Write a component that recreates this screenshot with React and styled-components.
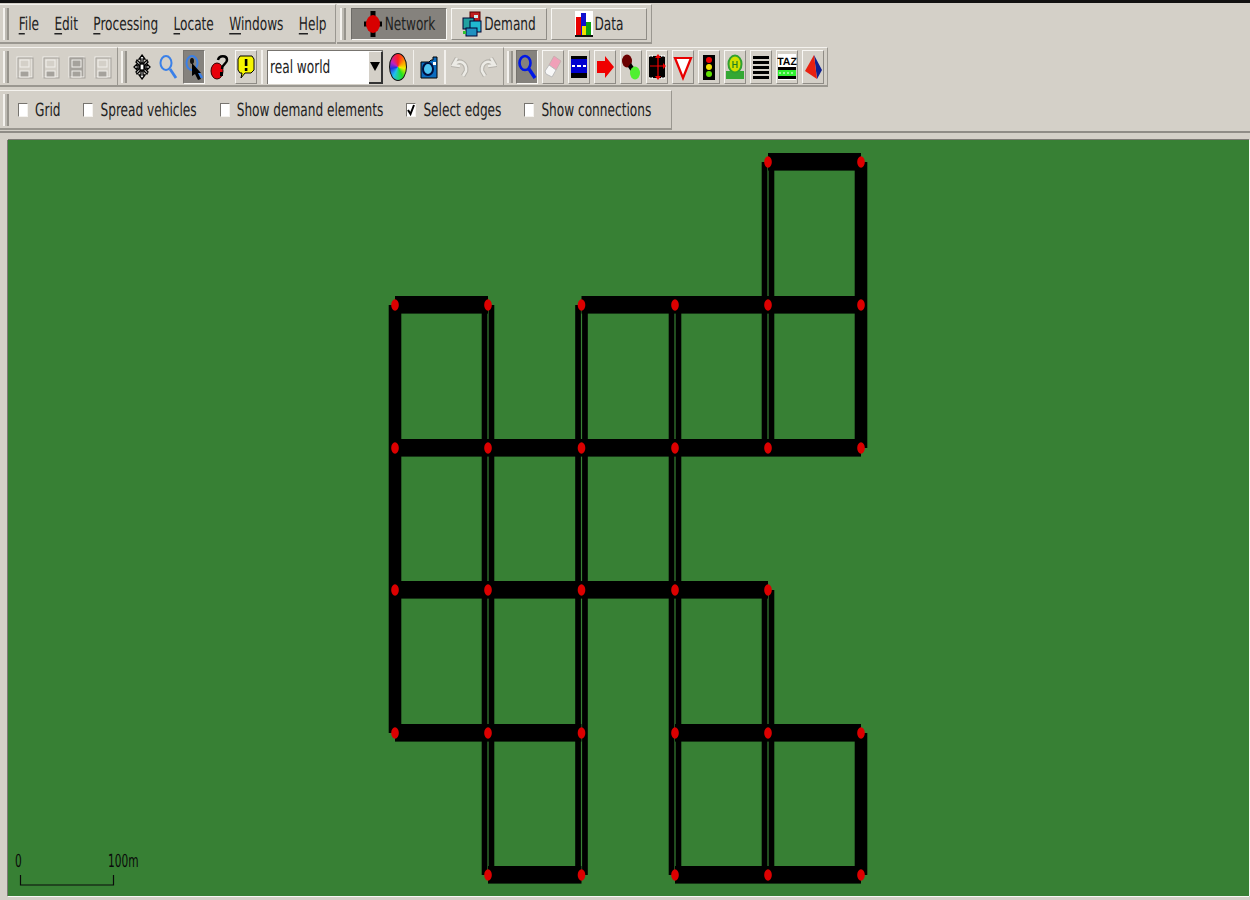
import styled, { createGlobalStyle } from "styled-components";

const GlobalStyle = createGlobalStyle`
  html, body { margin: 0; padding: 0; background: #d4d0c8; }
  body { font-family: "DejaVu Sans", sans-serif; color: #222; overflow: hidden; text-rendering: geometricPrecision; }
`;

const Page = styled.div`
  width: 1250px;
  height: 900px;
  display: flex;
  flex-direction: column;
  background: #d4d0c8;
  border-top: 3px solid #111;
  box-sizing: border-box;
`;

const Dock = styled.div`
  display: flex;
  flex-direction: column;
  gap: 3px;
  padding-top: 1px;
  border-bottom: 2px solid #8f8c86;
  padding-bottom: 1px;
`;

const Row = styled.div`
  display: flex;
  height: 40px;
`;

const Bar = styled.div`
  width: ${(p) => p.$width}px;
  margin-left: ${(p) => p.$left || 0}px;
  box-sizing: border-box;
  display: flex;
  align-items: center;
  padding-left: 3px;
  white-space: nowrap;
  border-top: 1px solid #f4f2ee;
  border-right: 1px solid #9a9790;
  border-bottom: 2px solid #9a9790;
`;

const Grip = styled.div`
  width: 6px;
  height: 32px;
  margin-right: ${(p) => p.$gap}px;
  flex: none;
  border-left: 2px solid #f4f2ee;
  border-right: 2px solid #96938c;
  box-sizing: border-box;
  background: #bdbab3;
`;

const MenuItem = styled.span`
  padding: 0 7.7px;
  font-size: 12.15px;
  display: inline-block;
  transform: scaleY(1.5);
  u { text-underline-offset: 2px; }
`;

const Tabs = styled.div`
  display: flex;
  gap: 4px;
`;

const Tab = styled.div`
  width: 96px;
  height: 32px;
  box-sizing: border-box;
  display: flex;
  align-items: center;
  justify-content: center;
  gap: 2px;
  font-size: 12.15px;
  background: ${(p) => (p.$active ? "#85827d" : "#d4d0c8")};
  border: 1px solid;
  border-color: ${(p) => (p.$active ? "#6c6a66 #f8f7f4 #f8f7f4 #6c6a66" : "#f8f7f4 #8f8c86 #8f8c86 #f8f7f4")};
  span { display: inline-block; transform: scaleY(1.5); }
  svg { flex: none; }
`;

const Tools = styled.div`
  display: flex;
  gap: 4px;
  align-items: center;
`;

const ToolButton = styled.div`
  width: 22px;
  height: 34px;
  flex: none;
  box-sizing: border-box;
  margin-left: ${(p) => p.$left || 0}px;
  display: flex;
  align-items: center;
  justify-content: center;
  background: ${(p) => (p.$pressed ? "#85827d" : "#d4d0c8")};
  border: 1px solid;
  border-color: ${(p) =>
    p.$pressed
      ? "#76736e #f8f7f4 #f8f7f4 #76736e"
      : p.$raised
        ? "#f8f7f4 #8f8c86 #8f8c86 #f8f7f4"
        : "transparent"};
`;

const Sep = styled.div`
  width: ${(p) => (p.$thin ? 1 : 2)}px;
  height: 34px;
  margin: 0 4px;
  flex: none;
  background: #f2f0ec;
`;

const Combo = styled.div`
  width: 116px;
  height: 34px;
  flex: none;
  box-sizing: border-box;
  display: flex;
  background: #fff;
  border-top: 1px solid #77746f;
  border-left: 1px solid #77746f;
  font-size: 12.15px;
`;

const ComboText = styled.span`
  flex: 1;
  padding-left: 2px;
  line-height: 33px;
  transform: scaleY(1.5);
`;

const ComboArrow = styled.div`
  width: 14px;
  box-sizing: border-box;
  background: #d4d0c8;
  border-right: 2px solid #333;
  border-bottom: 2px solid #333;
  border-top: 1px solid #f8f7f4;
  display: flex;
  align-items: center;
  justify-content: center;
  &::after {
    content: "";
    border-left: 5px solid transparent;
    border-right: 5px solid transparent;
    border-top: 9px solid #000;
  }
`;

const Wheel = styled.div`
  width: 16px;
  height: 26px;
  border-radius: 50%;
  border: 1px solid #111;
  background: conic-gradient(#ff2020, #ffa000, #f0f000, #20e020, #20c0f0, #2030e0, #c020c0, #ff2020);
`;

const Options = styled.div`
  display: flex;
  align-items: center;
  gap: 23px;
`;

const Option = styled.label`
  display: flex;
  align-items: center;
  gap: 7px;
  font-size: 12.15px;
  span { display: inline-block; transform: scaleY(1.5); }
`;

const Box = styled.div`
  width: 10px;
  height: 14px;
  flex: none;
  box-sizing: border-box;
  background: #fff;
  border: 1px solid;
  border-color: #77746f #f4f2ee #f4f2ee #77746f;
  display: flex;
  align-items: center;
  justify-content: center;
`;

const CanvasWrap = styled.div`
  flex: 1;
  padding: 7px 0 0 8px;
  min-height: 0;
`;

const Canvas = styled.div`
  width: 1241px;
  height: 756px;
  background: #378034;
  box-shadow: 0 -1px 0 #7d7a75, -1px 0 0 #7d7a75, 0 1px 0 #f8f7f4, 1px 0 0 #f8f7f4;
  svg { display: block; }
`;

const I = ({ children, w = 20, h = 28 }) => (
  <svg width={w} height={h} viewBox={`0 0 ${w} ${h}`}>
    {children}
  </svg>
);

const Floppy = ({ dark }) => (
  <I>
    <rect x="2" y="4" width="15" height="20" fill={dark ? "#a5a29c" : "none"} stroke="#f2f0ec" />
    <rect x="3" y="5" width="15" height="20" fill="none" stroke="#a5a29c" />
    <rect x="5" y="7" width="9" height="7" fill="none" stroke="#f2f0ec" />
    <rect x="5" y="18" width="9" height="6" fill="#a5a29c" stroke="#f2f0ec" />
  </I>
);

const MoveIcon = () => (
  <I>
    <g fill="#fff" stroke="#000" strokeWidth="1.3">
      <path d="M10 2l3 4h-2v4H9V6H7z" />
      <path d="M10 26l3-4h-2v-4H9v4H7z" />
      <path d="M2 14l3-3v2h3v2H5v2z" />
      <path d="M18 14l-3-3v2h-3v2h3v2z" />
      <path d="M5 7l4 4-1 2-4-4zM15 7l-4 4 1 2 4-4zM5 21l4-4-1-2-4 4zM15 21l-4-4 1-2 4 4z" />
      <rect x="8" y="11" width="4" height="6" />
    </g>
  </I>
);

const Lens = ({ color, width = 2 }) => (
  <g fill="none" stroke={color} strokeWidth={width}>
    <ellipse cx="8" cy="10" rx="5.500" ry="7" />
    <path d="M12 16l6 9" strokeWidth={width + 0.8} />
  </g>
);

const InspectIcon = () => (
  <I>
    <Lens color="#3a80e8" />
    <path d="M8 10l9 10-3 0 3 6-3 1-3-6-3 2z" fill="#000" />
    <ellipse cx="8" cy="8" rx="2" ry="3" fill="#111" />
  </I>
);

const QueryIcon = () => (
  <I>
    <ellipse cx="7" cy="18" rx="6" ry="8" fill="#e8000a" stroke="#300" />
    <path d="M8 7c1-5 9-5 9 0 0 4-5 4-5 9" fill="none" stroke="#000" strokeWidth="2.5" />
    <rect x="10" y="19" width="3" height="4" fill="#000" />
  </I>
);

const NoticeIcon = () => (
  <I>
    <path d="M4 3h12l2 3v11l-3 3H9l-4 5 1-5H4l-2-3V6z" fill="#f5f500" stroke="#000" />
    <rect x="8.800" y="6" width="2.600" height="7" fill="#000" />
    <rect x="8.800" y="15" width="2.600" height="3" fill="#000" />
  </I>
);

const CameraIcon = () => (
  <I>
    <path d="M2 9h8l2-2h2V4h4v21H2z" fill="#0a6cc0" stroke="#000" />
    <ellipse cx="9" cy="16" rx="5" ry="6" fill="#4fc4f0" stroke="#001040" strokeWidth="2" />
    <rect x="14" y="9" width="3" height="3" fill="#fff" />
  </I>
);

const UndoIcon = ({ flip }) => (
  <I>
    <g transform={flip ? "translate(20 0) scale(-1 1)" : undefined} fill="none">
      <path d="M6 5l-4 7 7 1M4 11c5-5 12-1 11 7l-3 5" stroke="#b5b2ab" strokeWidth="4.500" />
      <path d="M6 5l-4 7 7 1M4 11c5-5 12-1 11 7l-3 5" stroke="#ecebe6" strokeWidth="2.500" />
    </g>
  </I>
);

const EraserIcon = () => (
  <I>
    <path d="M11 3l7 5-5 9-7-5z" fill="#f0a0b8" stroke="#c8b0b0" />
    <path d="M6 12l7 5-4 7-6-3-1-3z" fill="#f8f8f8" stroke="#bbb" />
  </I>
);

const LaneIcon = () => (
  <I>
    <rect x="2" y="3" width="16" height="3" fill="#000" />
    <rect x="2" y="6" width="16" height="14" fill="#0000d0" />
    <path d="M3 13h3M8 13h4M14 13h3" stroke="#fff" strokeWidth="2" />
    <rect x="2" y="20" width="16" height="5" fill="#000" />
  </I>
);

const ArrowIcon = () => (
  <I>
    <path d="M2 8h8V3l9 11-9 11v-5H2z" fill="#f00000" />
  </I>
);

const ConnectionIcon = () => (
  <I>
    <ellipse cx="6" cy="8" rx="5" ry="6.500" fill="#6a0000" />
    <path d="M10 10l4 6-3 4-4-6z" fill="#000" />
    <ellipse cx="14" cy="20" rx="5" ry="6.500" fill="#50f030" />
  </I>
);

const CrossingIcon = () => (
  <I>
    <rect x="2" y="3" width="16" height="22" fill="#000" />
    <path d="M2 3h4M14 3h4M2 25h4M14 25h4" stroke="#fff" strokeWidth="1.500" strokeDasharray="1.500 1" />
    <path d="M11 3v22M3 13h15" stroke="#f00000" strokeWidth="1.200" />
    <path d="M11 1l-3 4h6zM11 27l-3-4h6zM19 13l-3-3v6z" fill="#f00000" />
  </I>
);

const YieldIcon = () => (
  <I>
    <path d="M2 5h16l-8 20z" fill="#fff" stroke="#e80000" strokeWidth="2.200" />
  </I>
);

const LightIcon = () => (
  <I>
    <rect x="4" y="2" width="12" height="25" fill="#000" />
    <circle cx="10" cy="7" r="3" fill="#f00000" />
    <circle cx="10" cy="14" r="3" fill="#f0e000" />
    <circle cx="10" cy="21" r="3" fill="#60e000" />
  </I>
);

const StopIcon = () => (
  <I>
    <rect x="1" y="18" width="18" height="8" fill="#34a834" />
    <ellipse cx="10" cy="11" rx="6.500" ry="8.500" fill="#d0e000" stroke="#30a030" strokeWidth="2" />
    <path d="M8 8v7M12 8v7M8 11.500h4" stroke="#208020" strokeWidth="1.200" />
  </I>
);

const StripesIcon = () => (
  <I>
    {[3, 8, 13, 18, 23].map((y) => (
      <rect key={y} x="2" y={y} width="16" height="3" fill="#000" />
    ))}
  </I>
);

const TazIcon = () => (
  <I>
    <rect x="1" y="1" width="18" height="26" fill="#fff" />
    <text x="10" y="12" textAnchor="middle" fontSize="10.500" fontWeight="bold" fontFamily="Liberation Sans, sans-serif" fill="#000">TAZ</text>
    <rect x="1" y="14" width="18" height="3" fill="#000" />
    <rect x="1" y="17" width="18" height="6" fill="#30f030" />
    <path d="M2 20h16" stroke="#fff" strokeDasharray="2 2" />
    <rect x="1" y="23" width="18" height="3" fill="#000" />
  </I>
);

const PolygonIcon = () => (
  <I>
    <path d="M11 2l8 15-5 9z" fill="#102090" />
    <path d="M11 2l3 24L2 18z" fill="#e82010" />
  </I>
);

const NetworkIcon = () => (
  <I>
    <path d="M10 1v26M1 14h18" stroke="#000" strokeWidth="5" />
    <ellipse cx="10" cy="14" rx="7" ry="9" fill="#d80000" />
  </I>
);

const DemandIcon = () => (
  <I>
    <rect x="8" y="2" width="10" height="10" fill="#c02020" stroke="#500" />
    <rect x="1" y="8" width="11" height="11" fill="#20a0a0" stroke="#003" />
    <rect x="8" y="11" width="11" height="11" fill="#20b8d0" stroke="#003" />
    <rect x="4" y="18" width="11" height="8" fill="#2090c0" stroke="#003" />
    <rect x="12" y="5" width="4" height="3" fill="#d0f0f0" />
    <rect x="1" y="21" width="3" height="3" fill="#30c030" />
  </I>
);

const DataIcon = () => (
  <I w={18}>
    <rect x="0" y="1" width="18" height="26" fill="#fff" />
    <rect x="1" y="7" width="5" height="18" fill="#e80000" />
    <rect x="6" y="3" width="5" height="22" fill="#1010d0" />
    <rect x="11" y="12" width="5" height="13" fill="#10a010" />
    <rect x="0" y="25" width="18" height="2" fill="#101010" />
    <rect x="7" y="16" width="4" height="9" fill="#f0e000" />
  </I>
);

const xs = [395, 488, 581.5, 675, 768, 861];
const ys = [161, 304, 447, 589, 732, 874];

// [row, first column, last column]
const horizontal = [
  [0, 4, 5],
  [1, 0, 1],
  [1, 2, 5],
  [2, 0, 5],
  [3, 0, 4],
  [4, 0, 2],
  [4, 3, 5],
  [5, 1, 2],
  [5, 3, 5],
];

// [column, first row, last row, two lanes or one]
const vertical = [
  [0, 1, 4, false],
  [1, 1, 5, true],
  [2, 1, 5, true],
  [3, 1, 5, true],
  [4, 0, 2, true],
  [4, 3, 5, true],
  [5, 0, 2, false],
  [5, 4, 5, false],
];

const nodes = [
  [4, 0], [5, 0],
  [0, 1], [1, 1], [2, 1], [3, 1], [4, 1], [5, 1],
  [0, 2], [1, 2], [2, 2], [3, 2], [4, 2], [5, 2],
  [0, 3], [1, 3], [2, 3], [3, 3], [4, 3],
  [0, 4], [1, 4], [2, 4], [3, 4], [4, 4], [5, 4],
  [1, 5], [2, 5], [3, 5], [4, 5], [5, 5],
];

const NetworkMap = () => (
  <svg width="1241" height="756" viewBox="8 139 1241 756">
    {vertical.map(([c, a, b, two]) =>
      two ? (
        <g key={`v${c}${a}`} fill="#000">
          <rect x={xs[c] - 6.3} y={ys[a]} width="5.7" height={ys[b] - ys[a]} />
          <rect x={xs[c] + 0.6} y={ys[a]} width="5.7" height={ys[b] - ys[a]} />
        </g>
      ) : (
        <rect key={`v${c}${a}`} x={xs[c] - 6.3} y={ys[a]} width="12.6" height={ys[b] - ys[a]} fill="#000" />
      )
    )}
    {horizontal.map(([r, a, b]) => (
      <rect key={`h${r}${a}`} x={xs[a]} y={ys[r] - 9} width={xs[b] - xs[a]} height="17.6" fill="#000" />
    ))}
    {nodes.map(([c, r]) => (
      <ellipse key={`n${c}${r}`} cx={xs[c]} cy={ys[r]} rx="3.8" ry="5.8" fill="#dc0000" />
    ))}
    <g fontFamily="DejaVu Sans, sans-serif" fontSize="10.6" fill="#0a0a0a">
      <text transform="translate(15 866) scale(1 1.7)">0</text>
      <text transform="translate(108 866) scale(1 1.7)">100m</text>
    </g>
    <path d="M20.5 874v10h93v-10" fill="none" stroke="#0a0a0a" strokeWidth="1.2" />
  </svg>
);

const Mnemonic = ({ first, rest }) => (
  <MenuItem>
    <u>{first}</u>
    {rest}
  </MenuItem>
);

const options = [
  ["Grid", false],
  ["Spread vehicles", false],
  ["Show demand elements", false],
  ["Select edges", true],
  ["Show connections", false],
];

const Check = () => (
  <svg width="8" height="12" viewBox="0 0 8 12">
    <path d="M1 6l2.500 4L7 1" fill="none" stroke="#000" strokeWidth="2" />
  </svg>
);

const App = () => {
  return (
    <Page>
      <GlobalStyle />
      <Dock>
        <Row>
          <Bar $width={336}>
            <Grip $gap={2} />
            <Mnemonic first="F" rest="ile" />
            <Mnemonic first="E" rest="dit" />
            <Mnemonic first="P" rest="rocessing" />
            <Mnemonic first="L" rest="ocate" />
            <Mnemonic first="W" rest="indows" />
            <Mnemonic first="H" rest="elp" />
          </Bar>
          <Bar $width={315} $left={1}>
            <Grip $gap={5} />
            <Tabs>
              <Tab $active>
                <NetworkIcon />
                <span>Network</span>
              </Tab>
              <Tab>
                <DemandIcon />
                <span>Demand</span>
              </Tab>
              <Tab>
                <DataIcon />
                <span>Data</span>
              </Tab>
            </Tabs>
          </Bar>
        </Row>
        <Row>
          <Bar $width={118}>
            <Grip $gap={5} />
            <Tools>
              <ToolButton><Floppy /></ToolButton>
              <ToolButton><Floppy /></ToolButton>
              <ToolButton><Floppy dark /></ToolButton>
              <ToolButton><Floppy /></ToolButton>
            </Tools>
          </Bar>
          <Bar $width={386}>
            <Grip $gap={4} />
            <Tools>
              <ToolButton><MoveIcon /></ToolButton>
              <ToolButton><I><Lens color="#3a80e8" /></I></ToolButton>
              <ToolButton $pressed><InspectIcon /></ToolButton>
              <ToolButton><QueryIcon /></ToolButton>
              <ToolButton $raised><NoticeIcon /></ToolButton>
            </Tools>
            <Sep />
            <Combo>
              <ComboText>real world</ComboText>
              <ComboArrow />
            </Combo>
            <ToolButton $left={4}><Wheel /></ToolButton>
            <Sep $thin />
            <ToolButton><CameraIcon /></ToolButton>
            <Sep />
            <Tools>
              <ToolButton><UndoIcon /></ToolButton>
              <ToolButton><UndoIcon flip /></ToolButton>
            </Tools>
          </Bar>
          <Bar $width={324}>
            <Grip $gap={3} />
            <Tools>
              <ToolButton $pressed><I><Lens color="#0018e8" width={2.6} /></I></ToolButton>
              <ToolButton $raised><EraserIcon /></ToolButton>
              <ToolButton $raised><LaneIcon /></ToolButton>
              <ToolButton $raised><ArrowIcon /></ToolButton>
              <ToolButton $raised><ConnectionIcon /></ToolButton>
              <ToolButton $raised><CrossingIcon /></ToolButton>
              <ToolButton $raised><YieldIcon /></ToolButton>
              <ToolButton $raised><LightIcon /></ToolButton>
              <ToolButton $raised><StopIcon /></ToolButton>
              <ToolButton $raised><StripesIcon /></ToolButton>
              <ToolButton $raised><TazIcon /></ToolButton>
              <ToolButton $raised><PolygonIcon /></ToolButton>
            </Tools>
          </Bar>
        </Row>
        <Row>
          <Bar $width={672}>
            <Grip $gap={9} />
            <Options>
              {options.map(([label, checked]) => (
                <Option key={label}>
                  <Box>{checked && <Check />}</Box>
                  <span>{label}</span>
                </Option>
              ))}
            </Options>
          </Bar>
        </Row>
      </Dock>
      <CanvasWrap>
        <Canvas>
          <NetworkMap />
        </Canvas>
      </CanvasWrap>
    </Page>
  );
};

export default App;
